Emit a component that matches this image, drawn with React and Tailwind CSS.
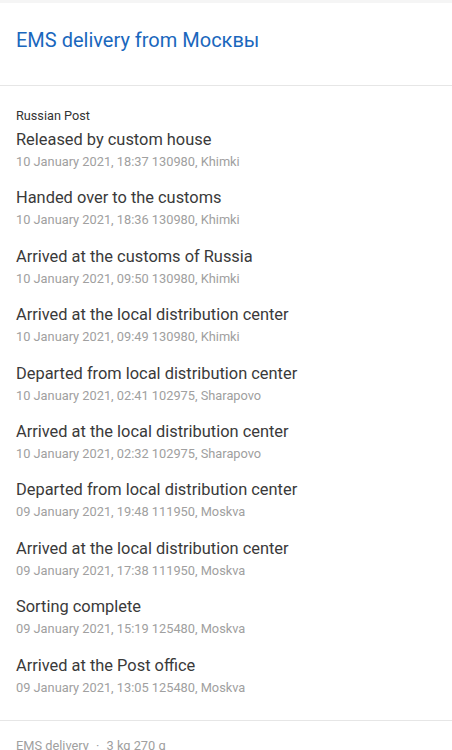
import React from "react";

const events = [
  { title: "Released by custom house", info: "10 January 2021, 18:37 130980, Khimki" },
  { title: "Handed over to the customs", info: "10 January 2021, 18:36 130980, Khimki" },
  { title: "Arrived at the customs of Russia", info: "10 January 2021, 09:50 130980, Khimki" },
  { title: "Arrived at the local distribution center", info: "10 January 2021, 09:49 130980, Khimki" },
  { title: "Departed from local distribution center", info: "10 January 2021, 02:41 102975, Sharapovo" },
  { title: "Arrived at the local distribution center", info: "10 January 2021, 02:32 102975, Sharapovo" },
  { title: "Departed from local distribution center", info: "09 January 2021, 19:48 111950, Moskva" },
  { title: "Arrived at the local distribution center", info: "09 January 2021, 17:38 111950, Moskva" },
  { title: "Sorting complete", info: "09 January 2021, 15:19 125480, Moskva" },
  { title: "Arrived at the Post office", info: "09 January 2021, 13:05 125480, Moskva" },
];

export default function App() {
  return (
    <div className="min-h-screen bg-white font-['Roboto',sans-serif] text-[#333]">
      <div className="h-[3px] bg-[#f5f5f5]" />

      {/* Header */}
      <div className="h-[83px] px-4 pt-[25px] border-b border-[#e6e6e6]">
        <h1 className="text-[20px] leading-6 text-[#1a67bd]">EMS delivery from Москвы</h1>
      </div>

      {/* Tracking events */}
      <div className="px-4 pt-[22px] pb-[8px] border-b border-[#e6e6e6]">
        <div className="text-[12.7px] leading-4 text-[#333]">Russian Post</div>
        <div className="pt-[4px]">
          {events.map((e, i) => (
            <div key={i} className="h-[58.4px]">
              <div className="text-[16.4px] leading-6 text-[#3a3a3a]">{e.title}</div>
              <div className="text-[12.8px] leading-4 mt-[2px] text-[#a0a0a0]">{e.info}</div>
            </div>
          ))}
        </div>
      </div>

      {/* Footer */}
      <div className="px-4 pt-[17px] pb-4 text-[12.8px] leading-4 text-[#a0a0a0]">
        EMS delivery <span className="mx-1">·</span> 3 kg 270 g
      </div>
    </div>
  );
}
